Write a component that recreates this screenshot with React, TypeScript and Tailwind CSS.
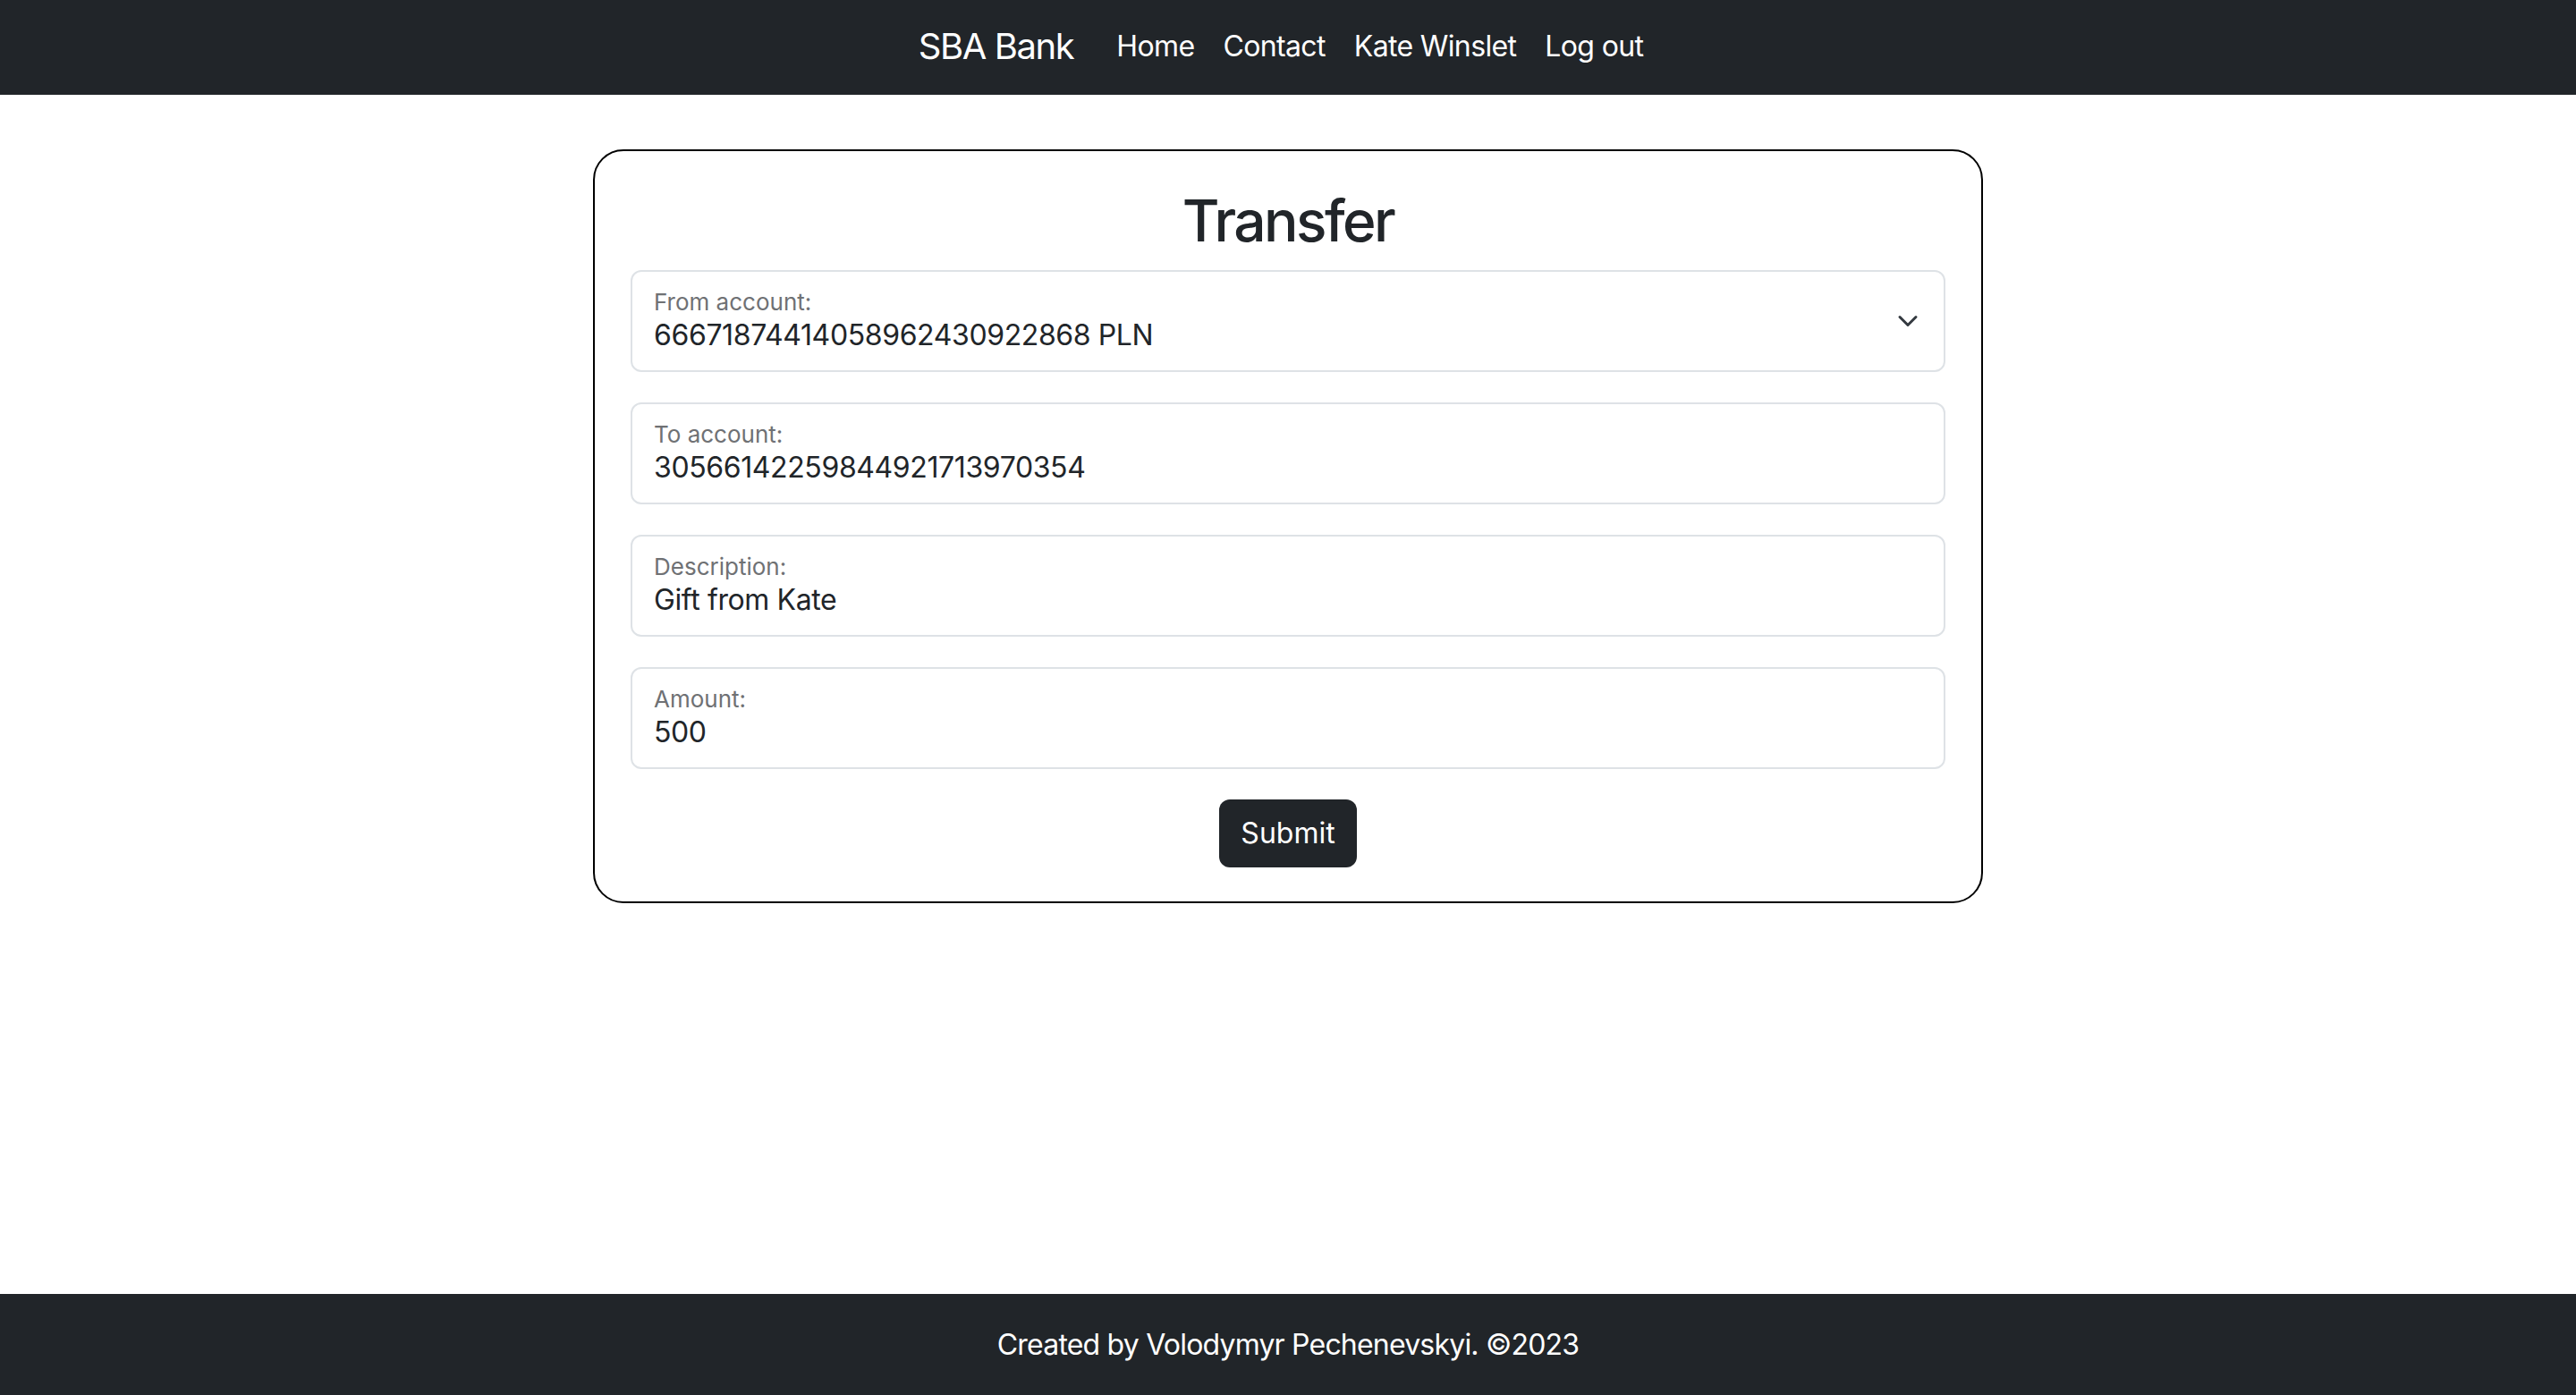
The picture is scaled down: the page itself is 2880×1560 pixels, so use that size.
import type { ReactNode } from "react";

const font = { fontFamily: "Inter, 'Noto Sans', sans-serif" };

function Field({ label, value, select }: { label: string; value: string; select?: boolean }) {
  return (
    <div className="mb-[34px] flex h-[114px] items-center rounded-xl border-2 border-[#dee2e6] bg-white">
      <div className="flex h-full flex-1 flex-col pl-[24px] pt-[21px]">
        <span className="text-[26px] leading-[26px] text-[#6f7174]">{label}</span>
        <span className="mt-[8px] text-[32px] leading-[32px] tracking-[-0.012em] text-[#212529]">{value}</span>
      </div>
      {select && (
        <svg className="mr-[28px] h-[24px] w-[24px]" viewBox="0 0 16 16" fill="none">
          <path d="m2 5 6 6 6-6" stroke="#343a40" strokeWidth="2" strokeLinecap="round" strokeLinejoin="round" />
        </svg>
      )}
    </div>
  );
}

function NavLink({ children }: { children: ReactNode }) {
  return <a className="px-[16px] text-[32px] tracking-[-0.02em] text-white">{children}</a>;
}

export default function App() {
  return (
    <div className="flex min-h-screen flex-col bg-white" style={font}>
      <nav className="flex h-[106px] items-center justify-center bg-[#212529] pb-[2px]">
        <span className="mr-[32px] text-[40px] tracking-[-0.035em] text-white">SBA Bank</span>
        <NavLink>Home</NavLink>
        <NavLink>Contact</NavLink>
        <NavLink>Kate Winslet</NavLink>
        <NavLink>Log out</NavLink>
      </nav>

      <main className="flex-1 pt-[61px]">
        <div className="mx-auto w-[1554px] rounded-[34px] border-2 border-black px-[40px] pb-[38px] pt-[40px]">
          <h2 className="mb-[16px] text-center text-[64px] font-medium leading-[1.2] tracking-[-0.04em] text-[#212529]">
            Transfer
          </h2>
          <Field label="From account:" value="66671874414058962430922868 PLN" select />
          <Field label="To account:" value="30566142259844921713970354" />
          <Field label="Description:" value="Gift from Kate" />
          <Field label="Amount:" value="500" />
          <div className="flex justify-center">
            <button className="h-[76px] rounded-xl bg-[#212529] px-[24px] text-[32px] text-white">Submit</button>
          </div>
        </div>
      </main>

      <footer className="flex h-[113px] items-center justify-center bg-[#212529]">
        <span className="text-[32px] tracking-[-0.025em] text-white">Created by Volodymyr Pechenevskyi. ©2023</span>
      </footer>
    </div>
  );
}
